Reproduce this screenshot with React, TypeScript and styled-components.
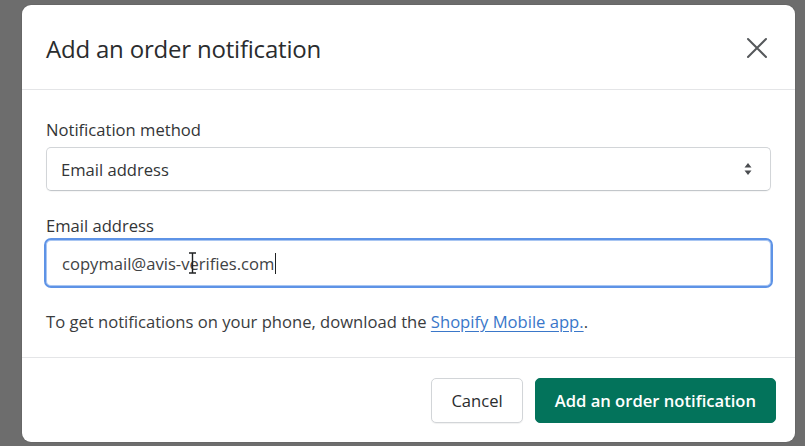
import React from "react";
import styled, { createGlobalStyle } from "styled-components";

const Global = createGlobalStyle`
  html, body { margin: 0; padding: 0; background: #6d6d6d; }
  body { font-family: "Open Sans", "Noto Sans", sans-serif; color: #202223; }
  * { box-sizing: border-box; }
`;

const Page = styled.div`
  width: 805px;
  height: 446px;
  overflow: hidden;
  padding: 5px 10px 0 22px;
`;

const Dialog = styled.div`
  width: 773px;
  height: 437px;
  background: #ffffff;
  border-radius: 9px;
  display: flex;
  flex-direction: column;
  box-shadow: 0 0 0 1px rgba(0,0,0,0.05);
`;

const Header = styled.div`
  height: 85px;
  border-bottom: 1px solid #e4e5e7;
  display: flex;
  align-items: center;
  justify-content: space-between;
  padding: 2px 24px 0 24px;
`;

const Title = styled.h2`
  margin: 0;
  font-size: 24px;
  font-weight: 400;
  color: #2a2c2e;
  letter-spacing: -0.2px;
`;

const CloseBtn = styled.button`
  width: 28px;
  height: 28px;
  border: 0;
  background: none;
  padding: 0;
  display: flex;
  align-items: center;
  justify-content: center;
  cursor: pointer;
`;

const Body = styled.div`
  flex: 1;
  padding: 28px 24px 0 24px;
  display: flex;
  flex-direction: column;
`;

const Field = styled.div<{ $gap: number; $mb: number }>`
  display: flex;
  flex-direction: column;
  gap: ${(p) => p.$gap}px;
  margin-bottom: ${(p) => p.$mb}px;
`;

const Label = styled.label`
  font-size: 16.6px;
  line-height: 24px;
  color: #333537;
`;

const Select = styled.div`
  height: 44px;
  border: 1px solid #d2d5d8;
  border-bottom-color: #c2c6ca;
  border-radius: 5px;
  display: flex;
  align-items: center;
  justify-content: space-between;
  padding: 0 18px 0 14px;
  font-size: 16.6px;
  color: #333537;
  box-shadow: 0 1px 1px rgba(0,0,0,0.04);
`;

const InputWrap = styled.div`
  margin: 0 -2px;
  height: 50px;
  border: 2px solid #5e93e6;
  border-radius: 7px;
  display: flex;
  align-items: center;
  padding: 0 16px;
  font-size: 16.6px;
  color: #404244;
  position: relative;
  box-shadow: inset 0 0 0 1px #a9c6f2;
`;

const Caret = styled.span`
  display: inline-block;
  width: 1px;
  height: 21px;
  background: #202223;
  vertical-align: middle;
  margin-left: 1px;
`;

const IBeam = styled.svg`
  position: absolute;
  left: 142px;
  top: 12px;
`;

const Help = styled.p`
  margin: 0;
  font-size: 16.6px;
  line-height: 24px;
  color: #3a3c3e;
`;

const Link = styled.a`
  color: #3a77c9;
  text-decoration: underline;
  text-underline-offset: 3px;
`;

const Footer = styled.div`
  height: 85px;
  border-top: 1px solid #e4e5e7;
  display: flex;
  align-items: center;
  justify-content: flex-end;
  gap: 12px;
  padding: 0 19px 0 24px;
`;

const Button = styled.button<{ $primary?: boolean }>`
  height: 45px;
  padding: 0 19px;
  border-radius: 5px;
  font-family: inherit;
  font-size: 16.6px;
  font-weight: ${(p) => (p.$primary ? 600 : 500)};
  color: ${(p) => (p.$primary ? "#ffffff" : "#2a2c2e")};
  background: ${(p) => (p.$primary ? "#03735b" : "#ffffff")};
  border: 1px solid ${(p) => (p.$primary ? "#03735b" : "#d2d5d8")};
  box-shadow: ${(p) => (p.$primary ? "none" : "0 1px 1px rgba(0,0,0,0.06)")};
  cursor: pointer;
`;

export default function App() {
  return (
    <>
      <Global />
      <Page>
        <Dialog>
          <Header>
            <Title>Add an order notification</Title>
            <CloseBtn aria-label="Close">
              <svg width="22" height="22" viewBox="0 0 22 22">
                <path d="M2 2 L20 20 M20 2 L2 20" stroke="#55585b" strokeWidth="2" strokeLinecap="round" />
              </svg>
            </CloseBtn>
          </Header>
          <Body>
            <Field $gap={5} $mb={23}>
              <Label>Notification method</Label>
              <Select>
                <span>Email address</span>
                <svg width="8" height="14" viewBox="0 0 8 14">
                  <path d="M4 1 L7.5 5.5 H0.5 Z M4 13 L7.5 8.5 H0.5 Z" fill="#4a4d50" />
                </svg>
              </Select>
            </Field>
            <Field $gap={0} $mb={22}>
              <Label>Email address</Label>
              <InputWrap>
                <span>copymail@avis-verifies.com</span>
                <Caret />
                <IBeam width="9" height="22" viewBox="0 0 9 22">
                  <path d="M1 1 H8 M4.5 1 V21 M1 21 H8" stroke="#202223" strokeWidth="1.4" fill="none" />
                </IBeam>
              </InputWrap>
            </Field>
            <Help>
              To get notifications on your phone, download the <Link>Shopify Mobile app.</Link>.
            </Help>
          </Body>
          <Footer>
            <Button>Cancel</Button>
            <Button $primary>Add an order notification</Button>
          </Footer>
        </Dialog>
      </Page>
    </>
  );
}
